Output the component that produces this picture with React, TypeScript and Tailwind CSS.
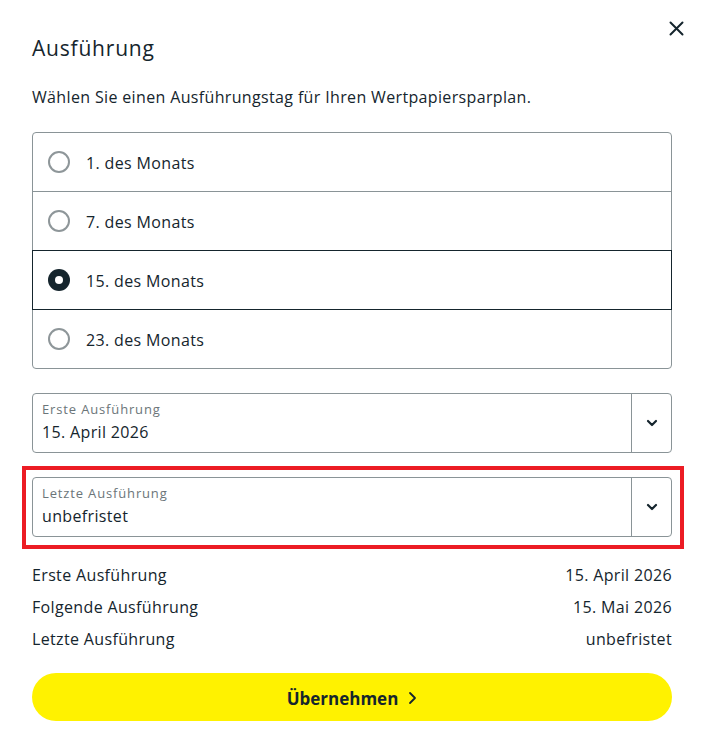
import React from "react";

const F = { fontFamily: "'Open Sans', 'Noto Sans', sans-serif" };

function Radio({ checked }: { checked: boolean }) {
  if (checked) {
    return (
      <span className="w-[22px] h-[22px] rounded-full bg-[#15252d] flex items-center justify-center">
        <span className="w-[8px] h-[8px] rounded-full bg-white" />
      </span>
    );
  }
  return <span className="w-[22px] h-[22px] rounded-full border-2 border-[#8e9699] bg-white" />;
}

function Chevron({ className }: { className?: string }) {
  return (
    <svg width="12" height="8" viewBox="0 0 12 8" className={className}>
      <path d="M2 2 L6 6 L10 2" fill="none" stroke="#15252d" strokeWidth="2.2" strokeLinecap="round" strokeLinejoin="round" />
    </svg>
  );
}

function Select({ label, value }: { label: string; value: string }) {
  return (
    <div className="h-[60px] border border-[#8a9497] rounded-[4px] flex">
      <div className="flex-1 pl-[9px] pt-[7px]">
        <div className="text-[13px] leading-[16px] tracking-[0.85px] text-[#6b7579]">{label}</div>
        <div className="text-[16px] leading-[22px] mt-[4px] tracking-[0.35px] text-[#15252d]">{value}</div>
      </div>
      <div className="w-[40px] border-l border-[#8a9497] flex items-center justify-center">
        <Chevron />
      </div>
    </div>
  );
}

export default function App() {
  const options = ["1. des Monats", "7. des Monats", "15. des Monats", "23. des Monats"];
  const selected = 2;
  return (
    <div className="w-[704px] h-[753px] bg-white relative px-8 text-[#15252d]" style={F}>
      <button className="absolute left-[668px] top-[20px] w-[16px] h-[16px] flex items-center justify-center">
        <svg width="15" height="15" viewBox="0 0 15 15">
          <path d="M1.5 1.5 L13.5 13.5 M13.5 1.5 L1.5 13.5" stroke="#15252d" strokeWidth="2" strokeLinecap="round" />
        </svg>
      </button>
      <div className="pt-[34px] h-[62px]">
        <h1 className="text-[21px] leading-[28px] font-normal tracking-[0.8px]">Ausführung</h1>
      </div>
      <p className="mt-[23px] text-[16px] leading-[24px] tracking-[0.35px]">
        Wählen Sie einen Ausführungstag für Ihren Wertpapiersparplan.
      </p>
      <div className="mt-[23px] flex flex-col">
        {options.map((o, i) => (
          <div
            key={o}
            className={
              "h-[60px] flex items-center pl-[15px] border " +
              (i > 0 ? "-mt-px " : "") +
              (i === 0 ? "rounded-t-[4px] " : "") +
              (i === options.length - 1 ? "rounded-b-[4px] " : "") +
              (i === selected ? "border-[#15252d] relative z-10" : "border-[#8a9497]")
            }
          >
            <Radio checked={i === selected} />
            <span className="ml-[16px] pt-[2px] text-[16px] leading-[24px] tracking-[0.35px]">{o}</span>
          </div>
        ))}
      </div>
      <div className="mt-[24px]">
        <Select label="Erste Ausführung" value="15. April 2026" />
      </div>
      <div className="mt-[24px] relative">
        <div className="absolute left-[-10px] right-[-12px] top-[-11px] bottom-[-12px] border-[4px] border-[#ec1c24] pointer-events-none" />
        <Select label="Letzte Ausführung" value="unbefristet" />
      </div>
      <div className="mt-[22px] text-[16px] tracking-[0.35px]">
        <div className="h-[32px] flex items-center justify-between">
          <span>Erste Ausführung</span>
          <span>15. April 2026</span>
        </div>
        <div className="h-[32px] flex items-center justify-between">
          <span>Folgende Ausführung</span>
          <span>15. Mai 2026</span>
        </div>
        <div className="h-[32px] flex items-center justify-between">
          <span>Letzte Ausführung</span>
          <span>unbefristet</span>
        </div>
      </div>
      <button className="mt-[18px] w-full h-[48px] rounded-full bg-[#fff200] flex items-center justify-center gap-[10px]">
        <span className="pt-[3px] text-[17px] font-bold text-[#15252d]">Übernehmen</span>
        <svg width="9" height="14" viewBox="0 0 9 14" className="mt-[2px]">
          <path d="M2 2 L7 7 L2 12" fill="none" stroke="#15252d" strokeWidth="1.8" strokeLinecap="round" strokeLinejoin="round" />
        </svg>
      </button>
    </div>
  );
}
